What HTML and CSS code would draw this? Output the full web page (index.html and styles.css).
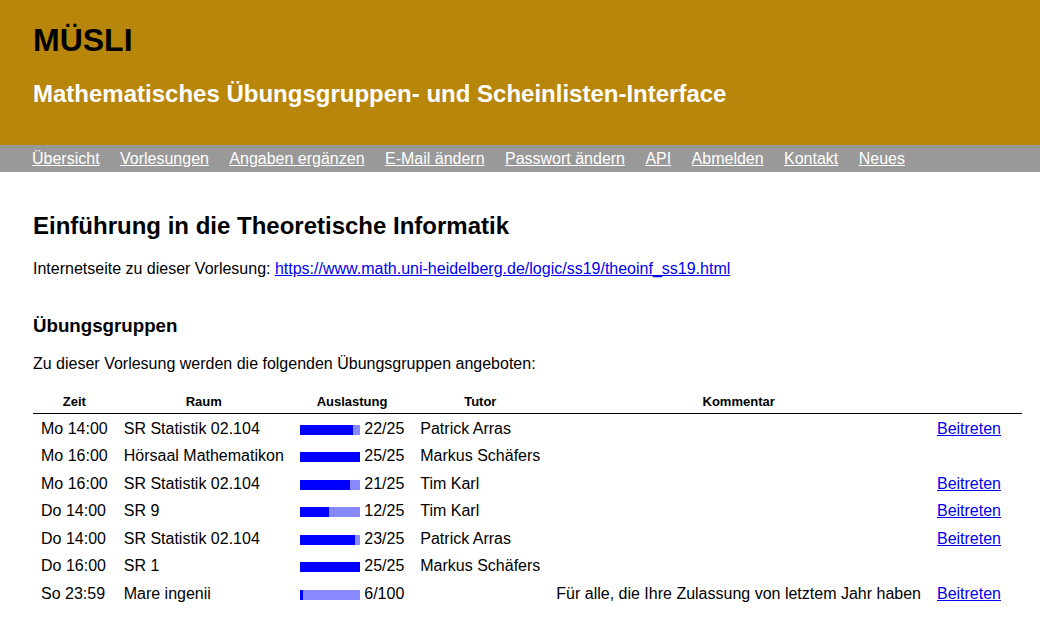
FILE: index.html
```html
<!DOCTYPE html>
<html lang="de">
<head>
<meta charset="utf-8">
<title>MÜSLI</title>
<link rel="stylesheet" href="styles.css">
</head>
<body>
<header class="site-header">
  <h1 class="site-title">MÜSLI</h1>
  <div class="site-subtitle">Mathematisches Übungsgruppen- und Scheinlisten-Interface</div>
</header>
<nav class="nav">
  <a href="#">Übersicht</a>
  <a href="#">Vorlesungen</a>
  <a href="#">Angaben ergänzen</a>
  <a href="#">E-Mail ändern</a>
  <a href="#">Passwort ändern</a>
  <a href="#">API</a>
  <a href="#">Abmelden</a>
  <a href="#">Kontakt</a>
  <a href="#">Neues</a>
</nav>
<main class="content">
  <h2 class="lecture-title">Einführung in die Theoretische Informatik</h2>
  <p class="text">Internetseite zu dieser Vorlesung: <a href="#">https://www.math.uni-heidelberg.de/logic/ss19/theoinf_ss19.html</a></p>
  <h3 class="section-title">Übungsgruppen</h3>
  <p class="text">Zu dieser Vorlesung werden die folgenden Übungsgruppen angeboten:</p>
  <table class="groups">
    <thead>
      <tr><th>Zeit</th><th>Raum</th><th>Auslastung</th><th>Tutor</th><th>Kommentar</th><th class="col-action"></th></tr>
    </thead>
    <tbody>
      <tr><td>Mo 14:00</td><td>SR Statistik 02.104</td><td><span class="bar"><span class="fill" style="width:88%"></span></span> 22/25</td><td>Patrick Arras</td><td></td><td><a href="#">Beitreten</a></td></tr>
      <tr><td>Mo 16:00</td><td>Hörsaal Mathematikon</td><td><span class="bar"><span class="fill" style="width:100%"></span></span> 25/25</td><td>Markus Schäfers</td><td></td><td></td></tr>
      <tr><td>Mo 16:00</td><td>SR Statistik 02.104</td><td><span class="bar"><span class="fill" style="width:84%"></span></span> 21/25</td><td>Tim Karl</td><td></td><td><a href="#">Beitreten</a></td></tr>
      <tr><td>Do 14:00</td><td>SR 9</td><td><span class="bar"><span class="fill" style="width:48%"></span></span> 12/25</td><td>Tim Karl</td><td></td><td><a href="#">Beitreten</a></td></tr>
      <tr><td>Do 14:00</td><td>SR Statistik 02.104</td><td><span class="bar"><span class="fill" style="width:92%"></span></span> 23/25</td><td>Patrick Arras</td><td></td><td><a href="#">Beitreten</a></td></tr>
      <tr><td>Do 16:00</td><td>SR 1</td><td><span class="bar"><span class="fill" style="width:100%"></span></span> 25/25</td><td>Markus Schäfers</td><td></td><td></td></tr>
      <tr><td>So 23:59</td><td>Mare ingenii</td><td><span class="bar"><span class="fill" style="width:6%"></span></span> 6/100</td><td></td><td>Für alle, die Ihre Zulassung von letztem Jahr haben</td><td><a href="#">Beitreten</a></td></tr>
    </tbody>
  </table>
</main>
</body>
</html>
```

FILE: styles.css
```css
html, body {
  margin: 0;
  padding: 0;
  background: #ffffff;
  color: #000000;
  font-family: "Liberation Sans", Arial, sans-serif;
  font-size: 16px;
}

a {
  color: #0000ee;
}

.site-header {
  background: #b8860b;
  padding: 22px 33px 37px;
}

.site-title {
  margin: 0 0 21px;
  font-size: 32px;
  line-height: 37px;
  font-weight: bold;
  color: #000000;
}

.site-subtitle {
  margin: 0;
  font-size: 24px;
  line-height: 28px;
  font-weight: bold;
  color: #ffffff;
}

.nav {
  background: #999999;
  height: 27px;
  display: flex;
  align-items: center;
  gap: 20.4px;
  padding-left: 32px;
}

.nav a {
  color: #ffffff;
  font-size: 16px;
  line-height: 18px;
}

.content {
  padding: 0 18px 0 33px;
}

.lecture-title {
  margin: 40px 0 20px;
  font-size: 24px;
  line-height: 28px;
  font-weight: bold;
}

.text {
  margin: 0;
  line-height: 18px;
}

.section-title {
  margin: 37px 0 18px;
  font-size: 18.72px;
  line-height: 22px;
  font-weight: bold;
}

.groups {
  margin-top: 17px;
  width: 100%;
  border-collapse: collapse;
}

.groups th {
  font-size: 13px;
  line-height: 15px;
  font-weight: bold;
  padding: 4px 8px;
  text-align: center;
  border-bottom: 1px solid #000000;
  white-space: nowrap;
}

.groups td {
  padding: 4.5px 8px 3.5px;
  line-height: 19.5px;
  white-space: nowrap;
  text-align: left;
}

.groups .col-action {
  width: 100%;
}

.bar {
  display: inline-block;
  width: 60px;
  height: 10px;
  background: #8888ff;
  vertical-align: -1px;
}

.fill {
  display: block;
  height: 100%;
  background: #0000ff;
}
```
